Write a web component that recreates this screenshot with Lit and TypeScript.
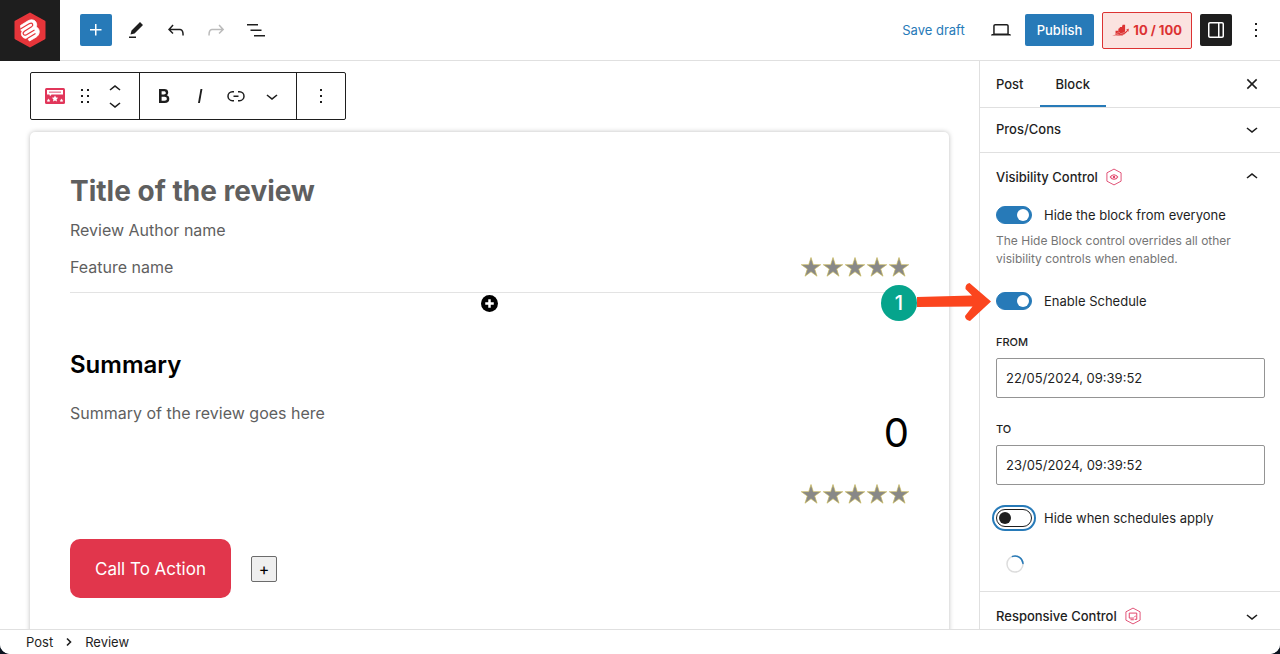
import { LitElement, html, css, svg } from "lit";
import { customElement, property } from "lit/decorators.js";

const icon = (body: unknown, size = 24) =>
  html`<svg width=${size} height=${size} viewBox="0 0 24 24" aria-hidden="true">${body}</svg>`;

const plus = svg`<path d="M11 12.5V17.5H12.5V12.5H17.5V11H12.5V6H11V11H6V12.5H11Z" fill="currentColor"/>`;
const pencil = svg`<path d="m19 7-3-3-8.500 8.500-1 4 4-1L19 7Zm-7 11.500H5V20h7v-1.500Z" fill="currentColor"/>`;
const undo = svg`<path d="M18.3 11.7c-.6-.6-1.4-.9-2.3-.9H6.7l2.9-3.3-1.1-1-4.5 5L8.5 16l1-1-2.7-2.7H16c.5 0 .9.2 1.3.5 1 1 1 3.4 1 4.5v.3h1.5v-.2c0-1.5 0-4.3-1.5-5.7z" fill="currentColor"/>`;
const redo = svg`<path d="M15.6 6.5l-1.1 1 2.9 3.3H8c-.9 0-1.7.3-2.3.9-1.4 1.5-1.4 4.2-1.4 5.6v.2h1.5v-.3c0-1.1 0-3.5 1-4.5.3-.3.7-.5 1.3-.5h9.2L14.5 15l1.1 1.1 4.6-4.6-4.6-5z" fill="currentColor"/>`;
const outline = svg`<path d="M3 6h11v1.500H3V6Zm3.500 5.500h11V13h-11v-1.500ZM10 17h11v1.500H10V17Z" fill="currentColor"/>`;
const laptop = svg`<path d="M20.500 16h-.7V8c0-1.100-.9-2-2-2H6.200c-1.100 0-2 .9-2 2v8h-.7c-.8 0-1.500.7-1.500 1.500h20c0-.8-.7-1.500-1.500-1.500zM5.700 8c0-.3.200-.5.500-.5h11.600c.3 0 .5.200.5.500v7.600H5.700V8z" fill="currentColor"/>`;
const drawer = svg`<path fill-rule="evenodd" d="M18 4H6c-1.100 0-2 .9-2 2v12c0 1.100.9 2 2 2h12c1.100 0 2-.9 2-2V6c0-1.100-.9-2-2-2zm-4 14.500H6c-.3 0-.5-.2-.5-.5V6c0-.3.200-.5.500-.5h8v13zm4.500-.5c0 .3-.2.500-.5.500h-2.500v-13H18c.3 0 .5.200.5.500v12z" fill="currentColor"/>`;
const more = svg`<path d="M13 19h-2v-2h2v2zm0-6h-2v-2h2v2zm0-6h-2V5h2v2z" fill="currentColor"/>`;
const close = svg`<path d="m5 5 14 14M19 5 5 19" stroke="currentColor" stroke-width="2.300" fill="none"/>`;
const chevronDown = svg`<path d="M17.500 11.600 12 16l-5.500-4.400.9-1.200L12 14l4.500-3.600 1 1.200z" fill="currentColor"/>`;
const chevronUp = svg`<path d="M6.500 12.400 12 8l5.500 4.400-.9 1.200L12 10l-4.500 3.600-1-1.200z" fill="currentColor"/>`;
const grip = svg`<path d="M8 7h2V5H8v2zm0 6h2v-2H8v2zm0 6h2v-2H8v2zm6-14v2h2V5h-2zm0 8h2v-2h-2v2zm0 6h2v-2h-2v2z" fill="currentColor"/>`;
const bold = svg`<path d="M14.700 11.300c1-.6 1.500-1.600 1.500-3 0-2.300-1.300-3.400-4-3.400H7v14h5.800c1.400 0 2.500-.3 3.300-1 .8-.7 1.200-1.700 1.200-2.900.1-1.900-.8-3.100-2.600-3.700zm-5.100-4h2.300c.6 0 1.100.1 1.400.4.300.3.500.7.500 1.200s-.2 1-.5 1.200c-.3.300-.8.400-1.400.4H9.600V7.300zm4.600 9c-.4.300-1 .4-1.700.4H9.600v-3.900h2.900c.7 0 1.300.2 1.700.5.400.3.600.8.600 1.500s-.2 1.200-.6 1.500z" fill="currentColor"/>`;
const italic = svg`<path d="M12.500 5 10 19h1.900l2.500-14z" fill="currentColor"/>`;
const link = svg`<path d="M10 17.389H8.444A5.194 5.194 0 1 1 8.444 7H10v1.500H8.444a3.694 3.694 0 0 0 0 7.389H10v1.500ZM14 7h1.556a5.194 5.194 0 0 1 0 10.390H14v-1.500h1.556a3.694 3.694 0 0 0 0-7.390H14V7Zm-4.500 6h5v-1.500h-5V13Z" fill="currentColor"/>`;
const addCircle = svg`<circle cx="12" cy="12" r="12" fill="currentColor"/><path d="M12 6v12M6 12h12" stroke="#fff" stroke-width="3.500"/>`;
const rankArrow = svg`<path d="M5 19V12.500h4V9.500l2-1V7h3l1-3h3.500v11L15 19Z" fill="currentColor"/><path d="M0 19.500c4-1 7-3 9.500-5.500l2.500 2.500c4-.5 7-2.500 9-5l-1.500-1 4.500-1.500-.5 5-1.300-1c-2.700 4-6.700 6-11.200 6L9 17c-2.500 2-5.500 3-9 2.500Z" fill="currentColor" stroke="#fbe3e0" stroke-width=".6"/>`;

const hexagon = svg`<path d="M12 2.500 20.500 7V17L12 21.500 3.500 17V7Z" fill="none" stroke="#e2567a" stroke-width="1.200" stroke-linejoin="round"/>`;
const eyeHex = svg`${hexagon}<path d="M7.500 12c2.500-3.700 6.500-3.700 9 0-2.500 3.700-6.500 3.700-9 0Z" fill="none" stroke="#e2456b" stroke-width="1.300"/><circle cx="12" cy="12" r="1.500" fill="#e2456b"/>`;
const screenHex = svg`${hexagon}<path d="M13 14.500H7.500V8.500h9v3M9 16.500h4M16.500 11.500v4.500M14 16h2.500M13.500 13.500l2-2" fill="none" stroke="#e2456b" stroke-width="1.200"/>`;

@customElement("star-rating")
class StarRating extends LitElement {
  static styles = css`
    :host { display: flex; }
    svg { display: block; }
  `;
  render() {
    return [1, 2, 3, 4, 5].map(
      () => html`<svg width="22" height="22" viewBox="0 0 22 22" aria-hidden="true">
        <path d="M12 1.500 14.300 8.700H21.700L15.700 13 18 20.200 12 15.800 6 20.200 8.300 13 2.300 8.700H9.700Z" fill="#888" stroke="#c9b95c" stroke-width=".7"/>
      </svg>`
    );
  }
}

@customElement("toggle-field")
class ToggleField extends LitElement {
  @property() label = "";
  @property({ type: Boolean }) on = false;
  @property({ type: Boolean }) ring = false;
  static styles = css`
    :host { display: block; }
    label { display: flex; align-items: center; gap: 12px; font-size: 13px; line-height: 18px; color: #1e1e1e; }
    input {
      appearance: none; box-sizing: border-box; margin: 0; flex: none;
      display: flex; align-items: center;
      width: 36px; height: 18px; padding: 0 2px;
      border: 1px solid #1e1e1e; border-radius: 9px; background: #fff;
    }
    input::before { content: ""; width: 12px; height: 12px; border-radius: 50%; background: #1e1e1e; }
    input:checked { justify-content: flex-end; background: #277ab8; border-color: #277ab8; }
    input:checked::before { background: #fff; }
    .ring { box-shadow: 0 0 0 2px #fff, 0 0 0 4px #277ab8; }
  `;
  render() {
    return html`<label><input type="checkbox" class=${this.ring ? "ring" : ""} .checked=${this.on} />${this.label}</label>`;
  }
}

@customElement("app-root")
class AppRoot extends LitElement {
  static styles = css`
    :host {
      display: block; height: 100vh; overflow: hidden; background: #0b1420;
      font-family: Inter, "Liberation Sans", sans-serif; font-size: 13px; line-height: 20px; color: #1e1e1e;
    }
    * { box-sizing: border-box; }
    svg { display: block; flex: none; }
    button { font: inherit; color: inherit; background: none; border: 0; padding: 0; margin: 0; }
    h1, h2, p { margin: 0; }
    a { color: inherit; text-decoration: none; }

    .frame { display: flex; flex-direction: column; height: 100%; background: #fff; border-radius: 0 0 10px 10px; overflow: hidden; }
    .header { display: flex; align-items: center; justify-content: space-between; height: 61px; flex: none; border-bottom: 1px solid #e0e0e0; }
    .left, .right { display: flex; align-items: center; gap: 8px; }
    .right { padding-right: 8px; }
    .logo { display: flex; align-items: center; justify-content: center; width: 60px; height: 61px; background: #1e1e1e; margin-right: 12px; }
    .tool { display: flex; align-items: center; justify-content: center; width: 32px; height: 32px; border-radius: 2px; }
    .primary { background: #277ab8; color: #fff; }
    .dark { background: #1e1e1e; color: #fff; }
    .dim { color: #bbb; }
    .save { color: #277ab8; padding: 0 12px; height: 32px; }
    .publish { padding: 0 12px; height: 32px; border-radius: 2px; background: #277ab8; color: #fff; font-weight: 500; }
    .score { display: flex; align-items: center; gap: 4px; height: 37px; padding: 0 9px; border: 1px solid #dc3232; border-radius: 2px; background: #fbe3e0; color: #dc3232; font-weight: 700; }

    .workspace { position: relative; display: flex; flex: 1; min-height: 0; }
    .canvas { flex: 1; min-width: 0; display: flex; flex-direction: column; padding: 11px 30px 0; overflow: hidden; }
    .toolbar { display: flex; align-self: flex-start; flex: none; height: 48px; border: 1px solid #1e1e1e; border-radius: 2px; }
    .group { display: flex; align-items: center; }
    .group + .group { border-left: 1px solid #1e1e1e; }
    .block-tools { padding: 0 12px; gap: 6px; }
    .movers { display: flex; flex-direction: column; align-items: center; }
    .movers button { height: 15px; display: flex; align-items: center; }
    .format { padding: 0 6px; }
    .format button { width: 36px; display: flex; justify-content: center; }
    .options { width: 49px; justify-content: center; }

    .review { flex: 1 0 auto; margin-top: 12px; padding: 40px; border-radius: 5px; box-shadow: 0 0 5px rgba(0, 0, 0, 0.26); color: #5f5f5f; font-size: 16px; line-height: 24px; }
    .title { font-size: 28px; line-height: 38px; font-weight: 700; }
    .author { margin-top: 8px; }
    .feature { display: flex; align-items: center; justify-content: space-between; height: 51px; border-bottom: 1px solid #e3e3e3; }
    .adder { display: flex; justify-content: center; padding-top: 2px; color: #000; }
    .summary-title { margin-top: 35px; font-size: 24px; line-height: 36px; font-weight: 600; color: #000; }
    .summary { display: flex; justify-content: space-between; padding-top: 18px; }
    .total { display: flex; flex-direction: column; align-items: flex-end; color: #000; }
    .number { font-size: 40px; line-height: 64px; }
    .total star-rating { margin-top: 18px; }
    .actions { display: flex; align-items: center; gap: 20px; margin-top: 34px; }
    .cta { height: 59px; padding: 0 25px; border-radius: 10px; background: #e1364c; color: #fff; font-size: 17px; }
    .add { width: 26px; height: 26px; border: 1px solid #6b6b6b; border-radius: 2px; background: #efefef; color: #000; }

    .sidebar { width: 301px; flex: none; border-left: 1px solid #e0e0e0; overflow: hidden; }
    .tabs { display: flex; align-items: stretch; height: 47px; border-bottom: 1px solid #e0e0e0; padding-right: 12px; }
    .tab { padding: 0 16px; font-weight: 500; }
    .active { box-shadow: inset 0 -2px #277ab8; }
    .close { margin-left: auto; width: 32px; display: flex; align-items: center; justify-content: center; }
    .panel-head { display: flex; align-items: center; width: 100%; height: 48px; padding: 0 16px; font-weight: 500; text-align: left; }
    .panel-head svg:last-child { margin-left: auto; }
    .mark { margin-left: 6px; }
    .short { height: 45px; padding-bottom: 2px; border-bottom: 1px solid #e0e0e0; }
    .body { padding: 5px 16px 18px; border-bottom: 1px solid #e0e0e0; }
    .help { margin-top: 8px; font-size: 12px; line-height: 18px; color: #757575; }
    .schedule { margin-top: 24px; }
    .field { display: flex; flex-direction: column; gap: 6px; margin-top: 22px; margin-right: -1px; }
    .field + .field { margin-top: 21px; }
    .field label { font-size: 11px; line-height: 20px; font-weight: 500; text-transform: uppercase; }
    .field input { width: 100%; height: 40px; padding: 0 9px; border: 1px solid #949494; border-radius: 2px; background: #fff; color: #1e1e1e; font: inherit; }
    .apply { margin-top: 24px; }
    .spinner { margin: 28px 0 0 10px; }

    .callout { position: absolute; top: 222px; right: 289px; display: flex; align-items: center; }
    .badge { display: flex; align-items: center; justify-content: center; width: 36px; height: 36px; border-radius: 50%; background: #06a48c; color: #fff; font-size: 20px; font-weight: 500; }
    .footer { display: flex; align-items: center; gap: 4px; height: 25px; flex: none; padding: 0 26px; border-top: 1px solid #e0e0e0; background: #fff; }
  `;

  render() {
    return html`
      <div class="frame">
        <header class="header">
          <div class="left">
            <a class="logo" href="#" aria-label="Home">
              <svg width="32" height="36" viewBox="0 0 32 36" aria-hidden="true">
                <path d="M16 1.500 30.500 9.700V26.300L16 34.500 1.500 26.300V9.700Z" fill="#e6353a" stroke="#e6353a" stroke-width="2" stroke-linejoin="round"/>
                <path d="M6.500 13.500 14.500 8.500C20 6 24 10.500 22.300 14.800 26.800 17.500 25.800 23 22 25.200L15.500 29 13.500 26.500C9 27 6 23 8 19.500 6.500 18 6.500 17 6.800 16Z" fill="#fff" stroke="#fff" stroke-width=".8" stroke-linejoin="round"/>
                <path d="M6 17.200 15.500 11.600c3-1.300 4.500 1.500 2 3.200L10.500 19.200c-2.800 2-.8 5 2 3.600L20.500 18M12.500 27 21.500 21.600" fill="none" stroke="#e6353a" stroke-width="1.200"/>
              </svg>
            </a>
            <button class="tool primary" aria-label="Add block">${icon(plus)}</button>
            <button class="tool" aria-label="Tools">${icon(pencil)}</button>
            <button class="tool" aria-label="Undo">${icon(undo)}</button>
            <button class="tool dim" aria-label="Redo">${icon(redo)}</button>
            <button class="tool" aria-label="Document overview">${icon(outline)}</button>
          </div>
          <div class="right">
            <button class="save">Save draft</button>
            <button class="tool" aria-label="View">${icon(laptop)}</button>
            <button class="publish">Publish</button>
            <button class="score">${icon(rankArrow, 17)}10 / 100</button>
            <button class="tool dark" aria-label="Settings">${icon(drawer)}</button>
            <button class="tool" aria-label="Options">${icon(more)}</button>
          </div>
        </header>

        <div class="workspace">
          <main class="canvas">
            <div class="toolbar" role="toolbar" aria-label="Block tools">
              <div class="group block-tools">
                <button aria-label="Review">
                  <svg width="24" height="24" viewBox="0 0 24 24" aria-hidden="true">
                    <rect x="2" y="4" width="20" height="16" rx="1.500" fill="#e1365a"/>
                    <path d="M4 6h16v4.500H8.500L7 12.200 6.500 10.500H4Z" fill="#fff"/>
                    <path d="M6 8.200h12" stroke="#e88aa0" stroke-width="1.500"/>
                    <path d="m12 11.500 1 2 2.200.3-1.600 1.500.4 2.200-2-1-2 1 .4-2.200-1.600-1.500 2.200-.3ZM5.500 14.500l.6 1.200 1.300.2-1 .9.300 1.300-1.200-.6-1.200.6.300-1.300-1-.9 1.300-.2ZM18.500 14.500l.6 1.200 1.300.2-1 .9.300 1.300-1.200-.6-1.200.6.300-1.300-1-.9 1.300-.2Z" fill="#fff"/>
                  </svg>
                </button>
                <button aria-label="Drag">${icon(grip)}</button>
                <div class="movers">
                  <button aria-label="Move up">${icon(chevronUp)}</button>
                  <button aria-label="Move down">${icon(chevronDown)}</button>
                </div>
              </div>
              <div class="group format">
                <button aria-label="Bold">${icon(bold)}</button>
                <button aria-label="Italic">${icon(italic)}</button>
                <button aria-label="Link">${icon(link)}</button>
                <button aria-label="More formatting">${icon(chevronDown)}</button>
              </div>
              <div class="group options">
                <button aria-label="Block options">${icon(more)}</button>
              </div>
            </div>

            <article class="review">
              <h1 class="title">Title of the review</h1>
              <p class="author">Review Author name</p>
              <div class="feature"><span>Feature name</span><star-rating></star-rating></div>
              <div class="adder"><button aria-label="Add feature">${icon(addCircle, 17)}</button></div>
              <h2 class="summary-title">Summary</h2>
              <div class="summary">
                <p>Summary of the review goes here</p>
                <div class="total"><span class="number">0</span><star-rating></star-rating></div>
              </div>
              <div class="actions">
                <button class="cta">Call To Action</button>
                <button class="add">+</button>
              </div>
            </article>
          </main>

          <aside class="sidebar">
            <div class="tabs" role="tablist">
              <button class="tab" role="tab">Post</button>
              <button class="tab active" role="tab" aria-selected="true">Block</button>
              <button class="close" aria-label="Close settings">${icon(close, 16)}</button>
            </div>
            <button class="panel-head short">Pros/Cons ${icon(chevronDown)}</button>
            <section>
              <button class="panel-head" aria-expanded="true">
                Visibility Control <span class="mark">${icon(eyeHex, 20)}</span>${icon(chevronUp)}
              </button>
              <div class="body">
                <toggle-field label="Hide the block from everyone" on></toggle-field>
                <p class="help">The Hide Block control overrides all other visibility controls when enabled.</p>
                <toggle-field class="schedule" label="Enable Schedule" on></toggle-field>
                <div class="field"><label for="from">From</label><input id="from" type="text" value="22/05/2024, 09:39:52" /></div>
                <div class="field"><label for="to">To</label><input id="to" type="text" value="23/05/2024, 09:39:52" /></div>
                <toggle-field class="apply" label="Hide when schedules apply" ring></toggle-field>
                <svg class="spinner" width="18" height="18" viewBox="0 0 18 18" aria-hidden="true">
                  <circle cx="9" cy="9" r="8" fill="none" stroke="#ddd" stroke-width="1.500"/>
                  <path d="M6.500 1.400A8 8 0 0 1 17 8.500" fill="none" stroke="#277ab8" stroke-width="1.500" stroke-linecap="round"/>
                </svg>
              </div>
            </section>
            <button class="panel-head">
              Responsive Control <span class="mark">${icon(screenHex, 20)}</span>${icon(chevronDown)}
            </button>
          </aside>

          <div class="callout">
            <span class="badge">1</span>
            <svg width="74" height="40" viewBox="0 0 74 40" aria-hidden="true">
              <path d="M0 14 55 12.500 48.500 6Q48 1 52.500 0L74 18.500 53 38Q48 37 48 33L55.500 23.500 0 24Z" fill="#fb451e"/>
            </svg>
          </div>
        </div>

        <nav class="footer" aria-label="Breadcrumb">
          <a href="#">Post</a>
          <svg width="24" height="24" viewBox="0 0 24 24" aria-hidden="true"><path d="m10 8.500 3.500 3.500-3.500 3.500" fill="none" stroke="#1e1e1e" stroke-width="1.600"/></svg>
          <a href="#">Review</a>
        </nav>
      </div>
    `;
  }
}
